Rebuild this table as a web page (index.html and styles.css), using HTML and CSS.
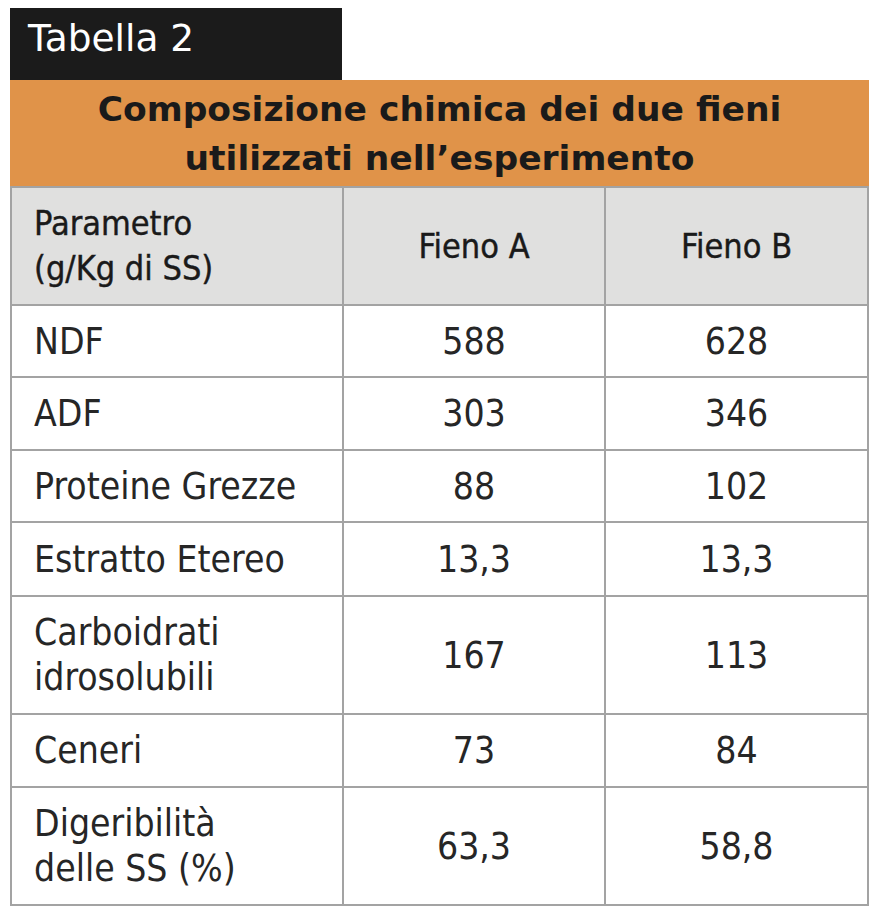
FILE: index.html
```html
<!DOCTYPE html>
<html lang="it">
<head>
<meta charset="utf-8">
<title>Tabella 2</title>
<link rel="stylesheet" href="styles.css">
</head>
<body>
<div class="page">
  <div class="tab">Tabella 2</div>
  <div class="title">Composizione chimica dei due fieni<br>utilizzati nell’esperimento</div>
  <table class="data">
    <colgroup><col class="c1"><col class="c2"><col class="c3"></colgroup>
    <thead>
      <tr class="r-head"><th class="param">Parametro<br>(g/Kg di SS)</th><th>Fieno A</th><th>Fieno B</th></tr>
    </thead>
    <tbody>
      <tr class="h72"><td class="param">NDF</td><td>588</td><td>628</td></tr>
      <tr class="h73"><td class="param">ADF</td><td>303</td><td>346</td></tr>
      <tr class="h72"><td class="param">Proteine Grezze</td><td>88</td><td>102</td></tr>
      <tr class="h74"><td class="param">Estratto Etereo</td><td>13,3</td><td>13,3</td></tr>
      <tr class="h118"><td class="param">Carboidrati<br>idrosolubili</td><td>167</td><td>113</td></tr>
      <tr class="h73"><td class="param">Ceneri</td><td>73</td><td>84</td></tr>
      <tr class="h118"><td class="param">Digeribilità<br>delle SS (%)</td><td>63,3</td><td>58,8</td></tr>
    </tbody>
  </table>
</div>
</body>
</html>
```

FILE: styles.css
```css
html, body {
  margin: 0;
  padding: 0;
  background: #ffffff;
}
.page {
  padding: 8px 0 0 10px;
  font-family: "DejaVu Sans", Verdana, sans-serif;
  color: #1a1a1a;
}
.tab {
  width: 332px;
  height: 72px;
  box-sizing: border-box;
  background: #1b1b1b;
  color: #ffffff;
  font-size: 37.5px;
  padding: 10px 0 0 18px;
  line-height: 40px;
}
.title {
  width: 859px;
  height: 106px;
  box-sizing: border-box;
  background: #e09349;
  font-weight: bold;
  font-size: 34.5px;
  line-height: 49px;
  text-align: center;
  padding-top: 5px;
  color: #1a1a1a;
}
.data {
  border-collapse: collapse;
  width: 857px;
  table-layout: fixed;
  margin: 0;
}
.c1 { width: 332px; }
.c2 { width: 262px; }
.c3 { width: 263px; }
.data th, .data td {
  border: 2px solid #a3a3a3;
  text-align: center;
  vertical-align: middle;
  padding: 0;
  line-height: 45px;
  font-stretch: condensed;
}
.data th {
  background: #e0e0df;
  font-weight: normal;
  font-size: 34px;
  -webkit-text-stroke: 0.4px #1a1a1a;
}
.data td {
  font-size: 37px;
  color: #262626;
}
.data .param {
  text-align: left;
  padding-left: 22px;
}
.r-head { height: 118px; }
.h72 { height: 72px; }
.h73 { height: 73px; }
.h74 { height: 74px; }
.h118 { height: 118px; }
```
